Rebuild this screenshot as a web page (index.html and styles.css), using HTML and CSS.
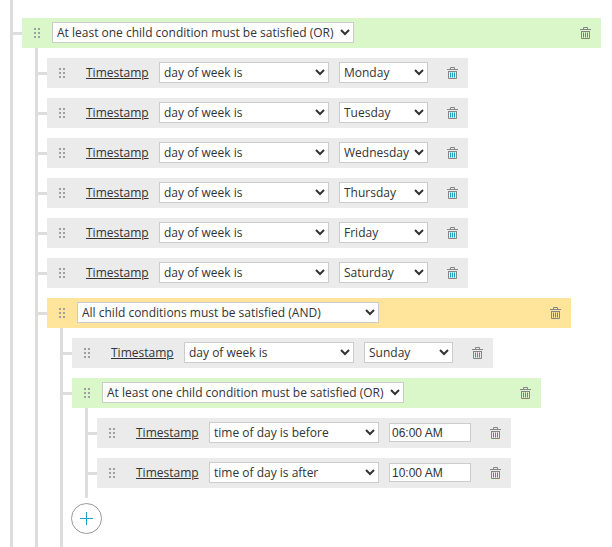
FILE: index.html
```html
<!DOCTYPE html>
<html>
	<head>
		<meta charset="UTF-8">
		<title>Conditions</title>
		<link rel="stylesheet" href="styles.css">
	</head>
	<body>
		<svg class="sprites" width="0" height="0">
			<symbol id="grip" viewBox="0 0 6 10">
				<path d="M0 0h2v2H0zM4 0h2v2H4zM0 4h2v2H0zM4 4h2v2H4zM0 8h2v2H0zM4 8h2v2H4z" fill="#a0a0a0"/>
			</symbol>
			<symbol id="trash" viewBox="0 0 11 12">
				<path d="M3.500 2V.5h4V2M0 2.500h11M1.500 4.500v7h8v-7M1 4.500h9" fill="none" stroke="#858585"/>
				<path d="M3 5.500h1v5H3zM5 5.500h1v5H5zM7 5.500h1v5H7z" fill="#1d9fc4"/>
			</symbol>
		</svg>
		<div class="tree">
			<div class="head head-or">
				<svg class="grip"><use href="#grip"/></svg>
				<select class="sel sel-group"><option>At least one child condition must be satisfied (OR)</option></select>
				<svg class="trash"><use href="#trash"/></svg>
			</div>
			<div class="children">
				<div class="row">
					<svg class="grip"><use href="#grip"/></svg>
					<a class="field" href="#">Timestamp</a>
					<select class="sel sel-op"><option>day of week is</option></select>
					<select class="sel sel-val"><option>Monday</option></select>
					<svg class="trash"><use href="#trash"/></svg>
				</div>
				<div class="row">
					<svg class="grip"><use href="#grip"/></svg>
					<a class="field" href="#">Timestamp</a>
					<select class="sel sel-op"><option>day of week is</option></select>
					<select class="sel sel-val"><option>Tuesday</option></select>
					<svg class="trash"><use href="#trash"/></svg>
				</div>
				<div class="row">
					<svg class="grip"><use href="#grip"/></svg>
					<a class="field" href="#">Timestamp</a>
					<select class="sel sel-op"><option>day of week is</option></select>
					<select class="sel sel-val"><option>Wednesday</option></select>
					<svg class="trash"><use href="#trash"/></svg>
				</div>
				<div class="row">
					<svg class="grip"><use href="#grip"/></svg>
					<a class="field" href="#">Timestamp</a>
					<select class="sel sel-op"><option>day of week is</option></select>
					<select class="sel sel-val"><option>Thursday</option></select>
					<svg class="trash"><use href="#trash"/></svg>
				</div>
				<div class="row">
					<svg class="grip"><use href="#grip"/></svg>
					<a class="field" href="#">Timestamp</a>
					<select class="sel sel-op"><option>day of week is</option></select>
					<select class="sel sel-val"><option>Friday</option></select>
					<svg class="trash"><use href="#trash"/></svg>
				</div>
				<div class="row">
					<svg class="grip"><use href="#grip"/></svg>
					<a class="field" href="#">Timestamp</a>
					<select class="sel sel-op"><option>day of week is</option></select>
					<select class="sel sel-val"><option>Saturday</option></select>
					<svg class="trash"><use href="#trash"/></svg>
				</div>

				<div class="head head-and">
					<svg class="grip"><use href="#grip"/></svg>
					<select class="sel sel-group"><option>All child conditions must be satisfied (AND)</option></select>
					<svg class="trash"><use href="#trash"/></svg>
				</div>
				<div class="children">
					<div class="row">
						<svg class="grip"><use href="#grip"/></svg>
						<a class="field" href="#">Timestamp</a>
						<select class="sel sel-op"><option>day of week is</option></select>
						<select class="sel sel-val"><option>Sunday</option></select>
						<svg class="trash"><use href="#trash"/></svg>
					</div>

					<div class="head head-or">
						<svg class="grip"><use href="#grip"/></svg>
						<select class="sel sel-group"><option>At least one child condition must be satisfied (OR)</option></select>
						<svg class="trash"><use href="#trash"/></svg>
					</div>
					<div class="children">
						<div class="row row-time">
							<svg class="grip"><use href="#grip"/></svg>
							<a class="field" href="#">Timestamp</a>
							<select class="sel sel-op"><option>time of day is before</option></select>
							<input class="time" type="text" value="06:00 AM">
							<svg class="trash"><use href="#trash"/></svg>
						</div>
						<div class="row row-time">
							<svg class="grip"><use href="#grip"/></svg>
							<a class="field" href="#">Timestamp</a>
							<select class="sel sel-op"><option>time of day is after</option></select>
							<input class="time" type="text" value="10:00 AM">
							<svg class="trash"><use href="#trash"/></svg>
						</div>
					</div>
					<button class="add" type="button">
						<svg width="13" height="13" viewBox="0 0 13 13"><path d="M6.500 0v13M0 6.500h13" stroke="#1d9fc4" fill="none"/></svg>
					</button>
				</div>
			</div>
		</div>
	</body>
</html>
```

FILE: styles.css
```css
html, body {
    margin: 0;
    height: 547px;
    overflow: hidden;
    background: #fff;
}
body {
    font-family: "Open Sans", sans-serif;
    font-size: 12px;
    color: #333;
}
.sprites {
    display: block;
}

/* tree lines */
.tree {
    margin-left: 10px;
    margin-right: 11px;
    padding: 18px 0 0 9px;
    border-left: 3px solid #ddd;
}
.children {
    display: flow-root;
    margin-left: 13px;
    padding: 10px 30px 0 9px;
    border-left: 3px solid #ddd;
}
.head, .row {
    position: relative;
    display: flex;
    align-items: center;
    box-sizing: border-box;
    height: 30px;
    padding-left: 12px;
}
.head::before, .row::before {
    content: "";
    position: absolute;
    left: -9px;
    top: 14px;
    width: 9px;
    height: 3px;
    background: #ddd;
}

/* groups */
.head {
    padding-right: 10px;
}
.head-or {
    background: #d9f7c9;
}
.head-and {
    background: #ffe59c;
}

/* condition rows */
.row {
    width: 421px;
    margin-bottom: 10px;
    background: #ebebeb;
}
.row-time {
    width: 414px;
}
.grip {
    flex: none;
    width: 6px;
    height: 10px;
    margin-right: 12px;
}
.field {
    width: 63px;
    margin-left: 9px;
    margin-right: 10px;
    padding-bottom: 2px;
    color: #333;
}
.sel {
    height: 21px;
    margin-bottom: 1px;
    border: 1px solid #ccc;
    border-radius: 0;
    background-color: #fff;
    font-family: "Open Sans", sans-serif;
    font-size: 12px;
    color: #333;
}
.sel-group {
    width: 302px;
}
.sel-op {
    width: 170px;
    margin-right: 10px;
}
.sel-val {
    width: 89px;
}
.time {
    box-sizing: border-box;
    width: 82px;
    height: 19px;
    margin-bottom: 1px;
    padding: 0 2px;
    border: 1px solid #ccc;
    font-family: "Liberation Sans", sans-serif;
    font-size: 12px;
    color: #333;
}
.trash {
    flex: none;
    width: 11px;
    height: 12px;
    margin-left: auto;
}
.row .trash {
    margin-right: 10px;
}
.add {
    display: flex;
    align-items: center;
    justify-content: center;
    box-sizing: border-box;
    width: 31px;
    height: 31px;
    margin: 5px 0 13px -1px;
    padding: 0;
    border: 1px solid #999;
    border-radius: 50%;
    background: #fff;
}
```
